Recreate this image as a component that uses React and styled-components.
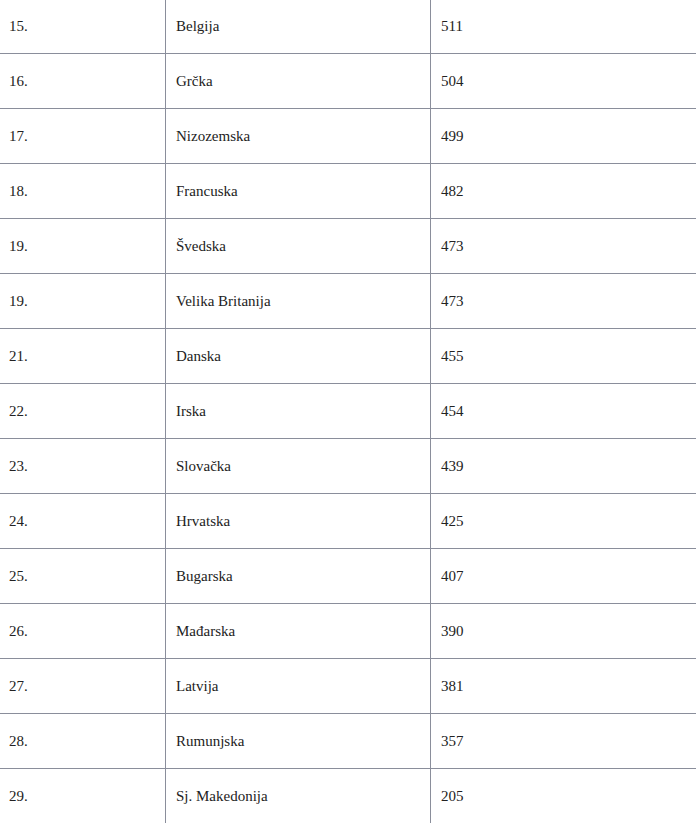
import styled, { createGlobalStyle } from 'styled-components';

const rows = [
  ['15.', 'Belgija', '511'],
  ['16.', 'Grčka', '504'],
  ['17.', 'Nizozemska', '499'],
  ['18.', 'Francuska', '482'],
  ['19.', 'Švedska', '473'],
  ['19.', 'Velika Britanija', '473'],
  ['21.', 'Danska', '455'],
  ['22.', 'Irska', '454'],
  ['23.', 'Slovačka', '439'],
  ['24.', 'Hrvatska', '425'],
  ['25.', 'Bugarska', '407'],
  ['26.', 'Mađarska', '390'],
  ['27.', 'Latvija', '381'],
  ['28.', 'Rumunjska', '357'],
  ['29.', 'Sj. Makedonija', '205'],
];

const GlobalStyle = createGlobalStyle`
  body {
    margin: 0;
    background: #ffffff;
    overflow: hidden;
  }
`;

const Table = styled.div`
  width: 696px;
  margin-top: -1px;
  font-family: "Liberation Serif", "Times New Roman", serif;
  font-size: 15px;
  color: #222222;
`;

const Row = styled.div`
  display: grid;
  grid-template-columns: 166px 265px 1fr;
  height: 55px;
  border-bottom: 1px solid #8a8e9b;
  box-sizing: border-box;
`;

const Cell = styled.div`
  display: flex;
  align-items: center;
  padding-left: ${({ $pad }) => $pad || 9}px;
  border-right: ${({ $last }) => ($last ? 'none' : '1px solid #8a8e9b')};
`;

export default function App() {
  return (
    <>
      <GlobalStyle />
      <Table>
        {rows.map(([rank, country, score], i) => (
          <Row key={i}>
            <Cell>{rank}</Cell>
            <Cell $pad={10}>{country}</Cell>
            <Cell $pad={10} $last>
              {score}
            </Cell>
          </Row>
        ))}
      </Table>
    </>
  );
}
